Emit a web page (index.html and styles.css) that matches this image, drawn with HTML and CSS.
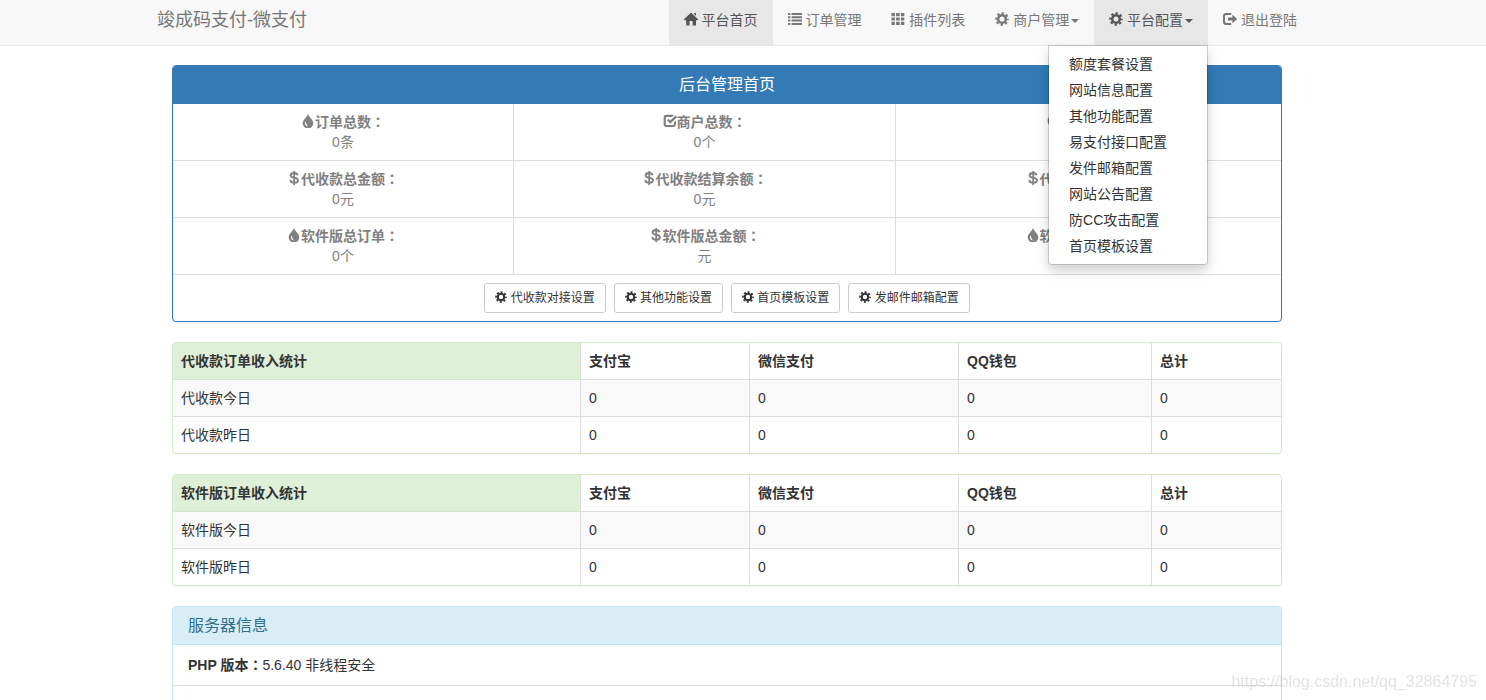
FILE: index.html
```html
<!DOCTYPE html>
<html lang="zh-CN">
<head>
<meta charset="utf-8">
<title>竣成码支付-微支付</title>
<link rel="stylesheet" href="styles.css">
</head>
<body>
<svg class="sprite" aria-hidden="true">
  <symbol id="home" viewBox="0 0 14 14"><path d="M7 .4 14.2 7.4 13.4 8.2H12V13.4H8.6V9H5.6V13.4H2.2V8.2H.6L-.2 7.4ZM10 .9h2v3l-2-1.8z"/></symbol>
  <symbol id="list" viewBox="0 0 14 14"><path d="M0 1h2.4v2H0zM3.6 1H14v2H3.6zM0 4.300h2.4v2H0zM3.6 4.300H14v2H3.6zM0 7.600h2.4v2H0zM3.6 7.600H14v2H3.6zM0 11h2.4v2H0zM3.6 11H14v2H3.6z"/></symbol>
  <symbol id="grid" viewBox="0 0 14 14"><path d="M.5 1h3.4v3.2H.5zM5.1 1h3.6v3.2H5.1zM9.9 1h3.4v3.2H9.9zM.5 5.4h3.4v3.2H.5zM5.1 5.4h3.6v3.2H5.1zM9.9 5.4h3.4v3.2H9.9zM.5 9.8h3.4V13H.5zM5.1 9.8h3.6V13H5.1zM9.9 9.8h3.4V13H9.9z"/></symbol>
  <symbol id="gear" viewBox="0 0 14 14"><g fill="none" stroke="currentColor"><circle cx="7" cy="7" r="3.8" stroke-width="2.500"/><circle cx="7" cy="7" r="5.800" stroke-width="2" stroke-dasharray="2.400 2.155" stroke-dashoffset="1.200"/></g></symbol>
  <symbol id="exit" viewBox="0 0 14 14"><path d="M8.2 1H3Q0 1 0 4v6q0 3 3 3h5.2v-2H3.4Q2 11 2 9.600V4.400Q2 3 3.400 3h4.800zM9.400 2.800 14.400 7l-5 4.200V8.400H5V5.600h4.400z"/></symbol>
  <symbol id="drop" viewBox="0 0 14 14"><path fill-rule="evenodd" d="M7 -.3C7.300 2.600 12.300 5.700 12.300 9.200A5.200 5.200 0 0 1 1.700 9.200C1.700 5.700 6.600 2.600 7 -.3ZM5 7.200C3.700 8.600 3.600 10.900 5.300 11.900 6 12.300 7 12.200 7 12.200 5.500 10.900 5 9.300 5 7.200Z"/></symbol>
  <symbol id="check" viewBox="0 0 14 14"><path d="M3.200 .8h8L8.900 3H3.600Q2.800 3 2.800 3.800v6.400q0 .8.8.8h6.400q.8 0 .8-.8V8.800l2.200-2.200V10q0 3-3 3H3.600q-3 0-3-3V4q0-3.200 2.600-3.200zM4 6.200l1.600-1.500L7.300 6.500l5-5L14 3.200 7.300 9.800z"/></symbol>
  <symbol id="usd" viewBox="0 0 14 14"><path fill="none" stroke="currentColor" stroke-width="1.800" d="M10.600 4.300C10.300 2.800 9.100 2 7.200 2 5 2 3.600 3 3.600 4.400 3.600 7.500 11 5.900 11 9.200c0 1.600-1.400 2.600-3.800 2.600-2.500 0-3.700-1-4-2.800M7.200 0v14"/></symbol>
  <symbol id="time" viewBox="0 0 14 14"><path fill-rule="evenodd" d="M7 .6a6.400 6.400 0 1 0 0 12.800A6.400 6.400 0 0 0 7 .6zm0 2.200a4.200 4.200 0 1 1 0 8.400 4.200 4.200 0 0 1 0-8.400zM6.200 3.800v3.700l2.600 1.400.6-1.200-1.700-.9v-3z"/></symbol>
</svg>

<header class="navbar">
  <div class="container navbar-inner">
    <a class="brand" href="#">竣成码支付-微支付</a>
    <ul class="nav">
      <li><a class="nav-link active" href="#"><svg class="icon"><use href="#home"/></svg> 平台首页</a></li>
      <li><a class="nav-link" href="#"><svg class="icon"><use href="#list"/></svg> 订单管理</a></li>
      <li><a class="nav-link" href="#"><svg class="icon"><use href="#grid"/></svg> 插件列表</a></li>
      <li><a class="nav-link" href="#"><svg class="icon"><use href="#gear"/></svg> 商户管理<span class="caret"></span></a></li>
      <li class="dropdown">
        <a class="nav-link active" href="#"><svg class="icon"><use href="#gear"/></svg> 平台配置<span class="caret"></span></a>
        <ul class="menu">
          <li><a href="#">额度套餐设置</a></li>
          <li><a href="#">网站信息配置</a></li>
          <li><a href="#">其他功能配置</a></li>
          <li><a href="#">易支付接口配置</a></li>
          <li><a href="#">发件邮箱配置</a></li>
          <li><a href="#">网站公告配置</a></li>
          <li><a href="#">防CC攻击配置</a></li>
          <li><a href="#">首页模板设置</a></li>
        </ul>
      </li>
      <li><a class="nav-link" href="#"><svg class="icon"><use href="#exit"/></svg> 退出登陆</a></li>
    </ul>
  </div>
</header>

<main class="container content">
  <section class="panel panel-primary">
    <h3 class="panel-heading">后台管理首页</h3>
    <table class="table overview">
      <colgroup><col class="ov-a"><col class="ov-b"><col></colgroup>
      <tbody>
        <tr>
          <td><b><svg class="icon"><use href="#drop"/></svg>订单总数<span class="colon" lang="zh-TW">：</span></b><br>0条</td>
          <td><b><svg class="icon"><use href="#check"/></svg>商户总数<span class="colon" lang="zh-TW">：</span></b><br>0个</td>
          <td><b><svg class="icon"><use href="#time"/></svg>订单总额<span class="colon" lang="zh-TW">：</span></b><br>&nbsp;</td>
        </tr>
        <tr>
          <td><b><svg class="icon"><use href="#usd"/></svg>代收款总金额<span class="colon" lang="zh-TW">：</span></b><br>0元</td>
          <td><b><svg class="icon"><use href="#usd"/></svg>代收款结算余额<span class="colon" lang="zh-TW">：</span></b><br>0元</td>
          <td><b><svg class="icon"><use href="#usd"/></svg>代收款结算总额<span class="colon" lang="zh-TW">：</span></b><br>&nbsp;</td>
        </tr>
        <tr>
          <td><b><svg class="icon"><use href="#drop"/></svg>软件版总订单<span class="colon" lang="zh-TW">：</span></b><br>0个</td>
          <td><b><svg class="icon"><use href="#usd"/></svg>软件版总金额<span class="colon" lang="zh-TW">：</span></b><br>元</td>
          <td><b><svg class="icon"><use href="#drop"/></svg>软件版今日订单<span class="colon" lang="zh-TW">：</span></b><br>&nbsp;</td>
        </tr>
      </tbody>
    </table>
    <div class="actions">
      <button class="btn" type="button"><svg class="icon"><use href="#gear"/></svg> 代收款对接设置</button>
      <button class="btn" type="button"><svg class="icon"><use href="#gear"/></svg> 其他功能设置</button>
      <button class="btn" type="button"><svg class="icon"><use href="#gear"/></svg> 首页模板设置</button>
      <button class="btn" type="button"><svg class="icon"><use href="#gear"/></svg> 发邮件邮箱配置</button>
    </div>
  </section>

  <section class="panel panel-success">
    <table class="table stats">
      <colgroup><col class="st-a"><col class="st-b"><col class="st-c"><col class="st-d"><col></colgroup>
      <thead><tr><th class="success">代收款订单收入统计</th><th>支付宝</th><th>微信支付</th><th>QQ钱包</th><th>总计</th></tr></thead>
      <tbody>
        <tr><td>代收款今日</td><td>0</td><td>0</td><td>0</td><td>0</td></tr>
        <tr><td>代收款昨日</td><td>0</td><td>0</td><td>0</td><td>0</td></tr>
      </tbody>
    </table>
  </section>

  <section class="panel panel-success">
    <table class="table stats">
      <colgroup><col class="st-a"><col class="st-b"><col class="st-c"><col class="st-d"><col></colgroup>
      <thead><tr><th class="success">软件版订单收入统计</th><th>支付宝</th><th>微信支付</th><th>QQ钱包</th><th>总计</th></tr></thead>
      <tbody>
        <tr><td>软件版今日</td><td>0</td><td>0</td><td>0</td><td>0</td></tr>
        <tr><td>软件版昨日</td><td>0</td><td>0</td><td>0</td><td>0</td></tr>
      </tbody>
    </table>
  </section>

  <section class="panel panel-info">
    <h3 class="panel-heading">服务器信息</h3>
    <ul class="list">
      <li><b>PHP 版本<span class="colon" lang="zh-TW">：</span></b>5.6.40 非线程安全</li>
      <li></li>
    </ul>
  </section>
</main>
<div class="watermark">https://blog.csdn.net/qq_32864795</div>
</body>
</html>
```
FILE: styles.css
```css
* { box-sizing: border-box; }

body {
  margin: 0;
  height: 100vh;
  overflow: hidden;
  background: #fff;
  color: #333;
  font: 14px/20px "Liberation Sans", "Noto Sans CJK SC", sans-serif;
}

a { color: inherit; text-decoration: none; }
ul { margin: 0; padding: 0; list-style: none; }

.sprite { display: none; }

.icon {
  display: inline-block;
  width: 14px;
  height: 14px;
  vertical-align: -1px;
  fill: currentColor;
  overflow: visible;
}

.colon { font-family: "Liberation Sans", "Noto Sans CJK TC", sans-serif; }

.container {
  width: 100%;
  max-width: 1170px;
  margin: 0 auto;
}

.navbar {
  padding-right: 32px;
  background: #f8f8f8;
  border-bottom: 1px solid #e7e7e7;
  color: #777;
}

.navbar-inner {
  display: flex;
  justify-content: space-between;
}

.brand {
  padding: 10px 15px 15px;
  font-size: 18px;
}

.nav { display: flex; }

.nav-link {
  display: block;
  padding: 10px 15px 15px;
  white-space: nowrap;
}

.nav-link.active {
  background: #e7e7e7;
  color: #555;
}

.caret {
  display: inline-block;
  margin-left: 2px;
  vertical-align: middle;
  border-top: 4px solid;
  border-right: 4px solid transparent;
  border-left: 4px solid transparent;
}

.dropdown { position: relative; }

.menu {
  position: absolute;
  top: 100%;
  right: 0;
  z-index: 10;
  min-width: 160px;
  padding: 5px 0;
  background: #fff;
  color: #333;
  border: 1px solid rgba(0, 0, 0, .15);
  border-radius: 0 0 4px 4px;
  background-clip: padding-box;
  box-shadow: 0 6px 12px rgba(0, 0, 0, .175);
}

.menu a {
  display: block;
  padding: 3px 20px;
  white-space: nowrap;
}

.content {
  max-width: 1202px;
  padding: 19px 62px 0 30px;
}

.panel {
  margin-bottom: 20px;
  border: 1px solid #ddd;
  border-radius: 4px;
  overflow: hidden;
  box-shadow: 0 1px 1px rgba(0, 0, 0, .05);
}

.panel-primary { border-color: #337ab7; }
.panel-success { border-color: #d6e9c6; }
.panel-info { border-color: #bce8f1; }

.panel-heading {
  margin: 0;
  padding: 10px 15px;
  border-bottom: 1px solid;
  font-size: 16px;
  font-weight: 400;
  line-height: 17px;
}

.panel-primary .panel-heading {
  background: #337ab7;
  border-color: #337ab7;
  color: #fff;
  text-align: center;
}

.panel-info .panel-heading {
  background: #d9edf7;
  border-color: #bce8f1;
  color: #31708f;
}

.table {
  width: 100%;
  table-layout: fixed;
  border-collapse: separate;
  border-spacing: 0;
}

.table th,
.table td {
  padding: 8px;
  text-align: left;
  border-bottom: 1px solid #ddd;
}

.table th + th,
.table td + td { border-left: 1px solid #ddd; }

.overview td {
  color: #808080;
  text-align: center;
}

.ov-a { width: 340px; }
.ov-b { width: 382px; }

.actions {
  display: flex;
  justify-content: center;
  gap: 8px;
  padding: 8px;
}

.btn {
  padding: 5px 10px;
  background: #fff;
  border: 1px solid #ccc;
  border-radius: 3px;
  color: #333;
  font: inherit;
  font-size: 12px;
  line-height: 18px;
}

.btn .icon { width: 12px; height: 12px; }

.stats tbody tr:first-child td { background: #f9f9f9; }
.stats tbody tr:last-child td { border-bottom: 0; }
.stats .success { background: #dff0d8; border-bottom-color: #d0e9c6; }

.st-a { width: 407px; }
.st-b { width: 169px; }
.st-c { width: 209px; }
.st-d { width: 193px; }

.list li {
  min-height: 41px;
  padding: 10px 15px;
  border-bottom: 1px solid #ddd;
}

.watermark {
  position: fixed;
  right: 9px;
  bottom: 8px;
  color: rgba(190, 190, 190, .45);
  font-size: 16px;
}
```
